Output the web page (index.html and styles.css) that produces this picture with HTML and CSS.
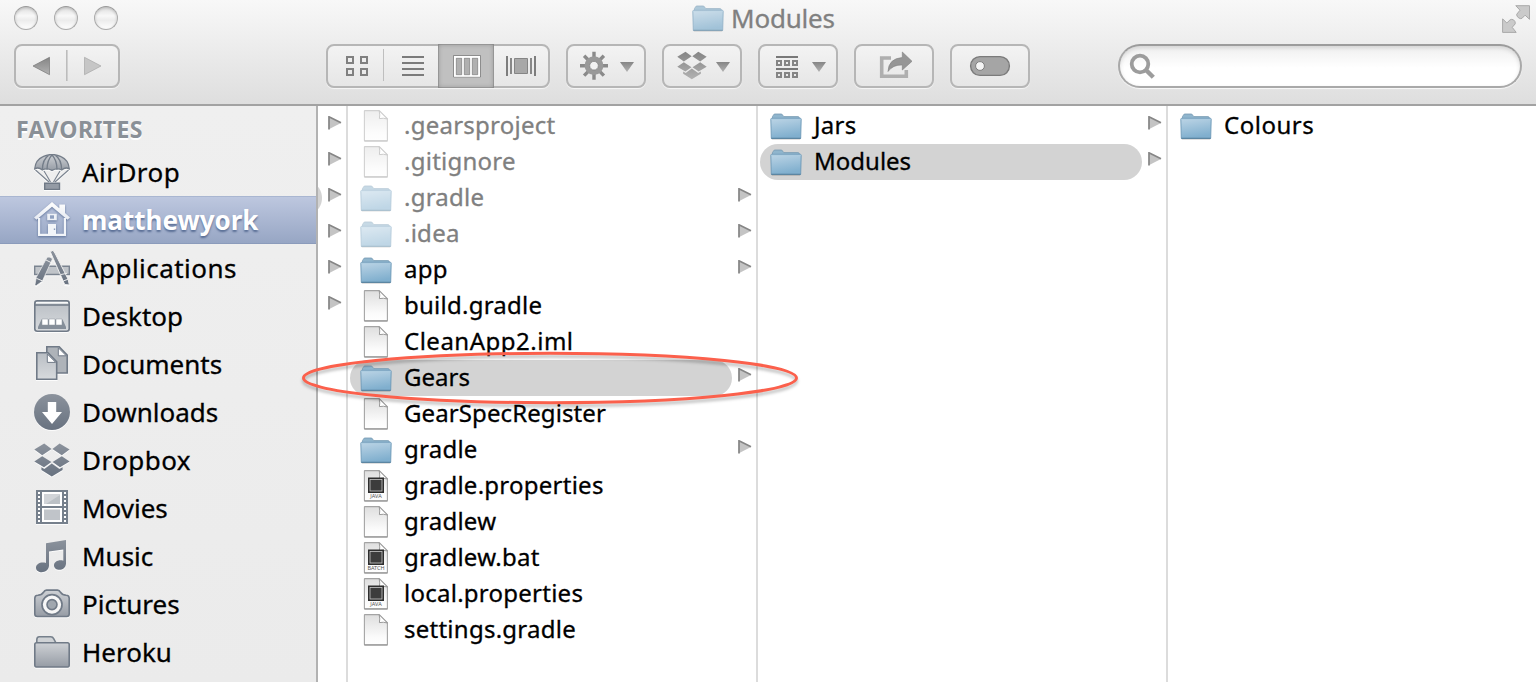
FILE: index.html
```html
<!DOCTYPE html>
<html lang="en">
<head>
<meta charset="utf-8">
<title>Modules</title>
<link rel="stylesheet" href="styles.css">
</head>
<body>
<svg class="defs" width="0" height="0" aria-hidden="true">
  <defs>
    <linearGradient id="gFolder" x1="0" y1="0" x2="0.25" y2="1"><stop offset="0" stop-color="#bdd5e6"/><stop offset="1" stop-color="#80afce"/></linearGradient>
    <linearGradient id="gFile" x1="0" y1="0" x2="0" y2="1"><stop offset="0" stop-color="#dedede"/><stop offset=".75" stop-color="#fbfbfb"/><stop offset="1" stop-color="#fff"/></linearGradient>
    <linearGradient id="gTool" x1="0" y1="0" x2="0" y2="1"><stop offset="0" stop-color="#858585"/><stop offset="1" stop-color="#b2b2b2"/></linearGradient>
    <linearGradient id="gSide" x1="0" y1="0" x2="0" y2="1"><stop offset="0" stop-color="#8b929c"/><stop offset="1" stop-color="#687280"/></linearGradient>
    <linearGradient id="gPale" x1="0" y1="0" x2="0" y2="1"><stop offset="0" stop-color="#ced1d5"/><stop offset="1" stop-color="#969ca5"/></linearGradient>
    <linearGradient id="gLight" x1="0" y1="0" x2="0" y2="1"><stop offset="0" stop-color="#b9bec4"/><stop offset="1" stop-color="#d7dadd"/></linearGradient>
    <linearGradient id="gHouse" x1="0" y1="0" x2="0" y2="1"><stop offset="0" stop-color="#fff"/><stop offset="1" stop-color="#e6eaf1"/></linearGradient>

    <symbol id="folder" viewBox="0 0 32 27">
      <path d="M2.500 8V3.400L4.300 1h7.400l2.100 2.600h14.100q1.600 0 1.600 1.800V8z" fill="#8fb5cd" stroke="#779bb3" stroke-width=".8"/>
      <path d="M.8 6.200q0-.9.9-.9h28.600q.9 0 .9.9L30.700 25.300H1.300z" fill="url(#gFolder)" stroke="#6d99b7" stroke-width=".9"/>
      <path d="M1.300 25.400h29.400" stroke="#5c86a2" stroke-width="1.200"/>
      <path d="M1.300 6.300h29.400" stroke="#a9cbdf" stroke-width=".8"/>
      <path d="M1.800 26.600h28.400" stroke="#000" stroke-opacity=".18" stroke-width=".8"/>
    </symbol>
    <symbol id="file" viewBox="0 0 26 32">
      <path d="M1.400 1.200q0-.6.6-.6h14.200l8.200 8.200v21.400q0 .7-.7.700H2q-.6 0-.6-.7z" fill="url(#gFile)" stroke="#a4a4a4" stroke-width="1.100"/>
      <path d="M16.200.8q1 4.400.2 7.800 4-.9 8 .4z" fill="#fff" stroke="#909090" stroke-width=".9"/>
      <path d="M1.200 31h23.400" stroke="#8d8d8d" stroke-width=".9"/>
    </symbol>
    <symbol id="chip" viewBox="0 0 26 32">
      <rect x="5" y="7.500" width="16" height="15.500" fill="#2e2e2e"/>
      <rect x="7" y="9.500" width="12" height="11.500" fill="#3c3c3c" stroke="#c9c9c9" stroke-width=".8"/>
    </symbol>
    <symbol id="tri" viewBox="0 0 14 14">
      <path d="M.8.8v12.400L13 7z" fill="#c4c4c4"/>
      <path d="M1 13.500V.8L13 6.800" fill="none" stroke="#858585" stroke-width="1.700"/>
    </symbol>
    <symbol id="dropbox" viewBox="0 0 36 36">
      <path d="M10.200 1.500 17.600 7 8.200 13.200.3 7.600zM25.600 1.500 35.600 7.600 27.800 13.200 18.400 7zM8.200 14.200l9.200 5.800-7.400 5.200L.3 19.400zM27.800 14.200l7.800 5.200L26 25.200 18.600 20zM17.800 21.600l7.600 5.400 3.200-1.800v2.700L17.800 34.500 7.400 27.900v-2.700L10.400 27z"/>
    </symbol>
  </defs>
</svg>

<div class="window">
  <header class="toolbar">
    <div class="titlebar">
      <div class="lights"><i></i><i></i><i></i></div>
      <div class="title"><svg class="title-folder"><use href="#folder"/></svg><span>Modules</span></div>
      <svg class="fullscreen" viewBox="0 0 28 28"><g fill="#cacaca" stroke="#a9a9a9" stroke-width="1"><path d="M13.800.7h13.700v13.600l-4.400-4.100-3.200 3.200q-1.400.6-3-.4-2.600-1.500-2.200-3.700L18 5.200z"/><path d="M.6 27.400V13.800L4.800 18 8 14.900q1.600-1.100 3.600 0 2.200 1.800 1.600 4l-3 3.400 4 5.100z"/></g></svg>
    </div>
    <div class="tools">
      <div class="btn nav">
        <svg viewBox="0 0 106 44"><path d="M19 22 35.500 13.300V30.700z" fill="url(#gTool)" stroke="#777" stroke-width=".7"/><path d="M52.800 6v31" stroke="#bcbcbc" stroke-width="1.600"/><path d="M87 22 70.500 13.300V30.700z" fill="#c6c6c6" stroke="#a8a8a8" stroke-width=".7"/></svg>
      </div>
      <div class="btn views">
        <svg class="seg first" viewBox="0 0 58 44"><path d="M21 13h6v6h-6zM35 13h6v6h-6zM21 25h6v6h-6zM35 25h6v6h-6z" fill="none" stroke="#808080" stroke-width="2"/><path d="M57.800 5v32" stroke="#bcbcbc" stroke-width="1.500"/></svg>
        <svg class="seg list" viewBox="0 0 54 44"><path d="M18 13h22M18 19h22M18 25h22M18 31h22" stroke="#7b7b7b" stroke-width="2"/></svg>
        <svg class="seg on" viewBox="0 0 56 44"><path d="M15.500 11.500h27v21.500h-27z" fill="none" stroke="#777" stroke-width=".7"/><path d="M17 13h24v18.800H17zM25 13v18M33 13v18" fill="none" stroke="#fff" stroke-width="2"/><path d="M18.300 14.300h5.400v16.400h-5.400zM26.300 14.300h5.400v16.400h-5.400zM34.300 14.300h5.400v16.400h-5.400z" fill="#b0b0b0" stroke="#888" stroke-width=".7"/></svg>
        <svg class="seg" viewBox="0 0 56 44"><path d="M13 12v20M41 12v20" stroke="#7d7d7d" stroke-width="2"/><path d="M17 14v16M37 14v16" stroke="#888" stroke-width="2"/><path d="M20.500 14.500h13v15h-13z" fill="#a8a8a8" stroke="#858585"/></svg>
      </div>
      <div class="btn"><svg viewBox="0 0 80 44"><g fill="none" stroke="#8a8a8a" stroke-width="3.400"><path d="M28 7.700v6M28 29.700v6M14 21.700h6M36 21.700h6M18.100 11.800l4.200 4.200M33.700 27.400l4.200 4.200M18.100 31.600l4.200-4.200M33.700 16l4.200-4.200"/></g><circle cx="28" cy="21.700" r="6.800" fill="none" stroke="#999" stroke-width="5.200"/><circle cx="28" cy="21.700" r="4.300" fill="#f2f2f2" stroke="#7c7c7c" stroke-width=".7"/><path d="M54 18h14l-7 10z" fill="url(#gTool)"/></svg></div>
      <div class="btn"><svg viewBox="0 0 80 44"><use href="#dropbox" x="15" y="6.500" width="30" height="30" fill="url(#gTool)"/><path d="M54 18h14l-7 10z" fill="url(#gTool)"/></svg></div>
      <div class="btn"><svg viewBox="0 0 80 44"><path d="M18 13h22M18 25h22" stroke="#787878" stroke-width="2"/><path d="M19 17h4v4h-4zM27 17h4v4h-4zM35 17h4v4h-4zM19 29h4v4h-4zM27 29h4v4h-4zM35 29h4v4h-4z" fill="none" stroke="#858585" stroke-width="2"/><path d="M54 18h14l-7 10z" fill="url(#gTool)"/></svg></div>
      <div class="btn"><svg viewBox="0 0 80 44"><path d="M37 14h-9.300v18.200h24.600V26" fill="none" stroke="#afafaf" stroke-width="3.600"/><path d="M34 27.500q.5-13 14.300-14V8L58 17.300 48.300 26v-5Q39 20.500 34 27.500z" fill="#969696" stroke="#7e7e7e" stroke-width=".6"/></svg></div>
      <div class="btn"><svg viewBox="0 0 80 44"><rect x="20.600" y="12.600" width="38.800" height="18.800" rx="9.400" fill="#a5a5a5" stroke="#7b7b7b" stroke-width="1.400"/><circle cx="30" cy="22" r="4.400" fill="#f5f5f5" stroke="#777" stroke-width=".9"/></svg></div>
      <div class="search"><svg viewBox="0 0 44 44"><circle cx="22" cy="20" r="8.300" fill="none" stroke="#9c9c9c" stroke-width="3.800"/><path d="M28 26l7.300 7.300" stroke="#9c9c9c" stroke-width="4.400"/></svg></div>
    </div>
  </header>

  <main class="browser">
    <nav class="sidebar">
      <h2>FAVORITES</h2>
      <ul>
        <li class="wide"><svg viewBox="0 0 36 36"><path d="M1.500 16 15 28M34.500 16 21 28M10 17l6.500 11M26 17l-6.500 11" fill="none" stroke="#7b8490" stroke-width="1.200"/><path d="M.7 14.800Q1.500 6 9 2.700 18-1.700 27 2.700 34.500 6 35.300 14.800q-4-2-7.600 1.200-4.500-2.500-9.700.4-5.200-2.900-9.700-.4Q4.700 12.800.7 14.800z" fill="url(#gPale)" stroke="#747d89" stroke-width="1.300"/><path d="M8.300 16Q8.500 5.500 14.500 1.400M27.700 16Q27.500 5.500 21.500 1.400M13 15.800Q13 6 18 1 23 6 23 15.800" fill="none" stroke="#747d89" stroke-width="1.300"/><path d="M10.700 29.200h14.800v6.200H10.700z" fill="#949ba5" stroke="#6f7986" stroke-width="1.400"/></svg><span>AirDrop</span></li>
        <li class="on"><svg viewBox="0 0 36 36"><path d="M0 15.500 18 0l7.300 6.200V2.600H31V11l5 4.500-2.500 2.300-15.500-13-15.500 13z" fill="url(#gHouse)"/><path d="M5.100 16v16.900h25.800V16" fill="none" stroke="#f2f5f9" stroke-width="2.200"/><path d="M13.200 11.800h9.600v6.400h-9.600z" fill="#eef1f6"/><path d="M16 13.300h4v3.400h-4z" fill="#8fa0c0"/><path d="M14 22h8v11h-8z" fill="#f2f5f9"/><path d="M19.800 26.500h1.400v1.400h-1.400z" fill="#7f91b2"/></svg><span>matthewyork</span></li>
        <li class="wide"><svg viewBox="0 0 36 36"><path d="M.7 16.200h34.600v8.300H.7z" fill="#c0c4c9" stroke="#7b8490" stroke-width="1.400"/><path d="M16.300 1.800 19 .2l2.300 3.600 12.800 25.400 1.300 5.800-4.700-.5z" fill="url(#gSide)" stroke="#eee" stroke-width="1"/><path d="M13.200 7.200q2.500-1 5.300 1.600L8.300 31.200l-6.300 4.600-1-1.300 1.300-7.200z" fill="url(#gSide)" stroke="#eee" stroke-width=".7"/><path d="m12 10 5.300 2.700M2.400 28.300l6 2.600M27 24.500l6-1.200M29.300 31l5.200-2" stroke="#eee" stroke-width="1"/></svg><span>Applications</span></li>
        <li><svg viewBox="0 0 36 36"><rect x=".8" y="2.800" width="34.400" height="30.400" rx="2.500" fill="url(#gLight)" stroke="#707a87" stroke-width="1.600"/><path d="M2 4.800h32" stroke="#fff" stroke-width="1.400"/><path d="M1 7h34" stroke="#707a87" stroke-width="1.300"/><path d="M7.500 21.500h21L32 29v2H4v-2z" fill="#858e99"/><path d="M8 21h6v6H8zM15 21h6v6h-6zM22 21h6v6h-6z" fill="#fff" stroke="#8d949e" stroke-width=".5"/></svg><span>Desktop</span></li>
        <li><svg viewBox="0 0 36 36"><path d="M12.800.800h12.400l8 8.200v18H12.800z" fill="#aeb3b9" stroke="#707a87" stroke-width="1.600"/><path d="M24.300 1.800v8h8z" fill="#fff" stroke="#707a87" stroke-width="1"/><path d="M2.800 6.800H14l8.700 9v17.400H2.800z" fill="url(#gLight)" stroke="#707a87" stroke-width="1.600"/><path d="M13.300 8v8.400h8.400z" fill="#fff" stroke="#707a87" stroke-width="1"/></svg><span>Documents</span></li>
        <li><svg viewBox="0 0 36 36"><circle cx="18" cy="18" r="18" fill="url(#gSide)"/><path d="M13.800 8h8.400v10H28l-10 12L8 18h5.800z" fill="#fff"/></svg><span>Downloads</span></li>
        <li class="wide"><svg viewBox="0 0 36 36" fill="url(#gSide)"><use href="#dropbox"/></svg><span>Dropbox</span></li>
        <li><svg viewBox="0 0 36 36"><path d="M2 0h32v34H2z" fill="#76808c"/><path d="M8 2h20v14H8zM8 18h20v14H8z" fill="#fff"/><path d="M10 4h16v10H10z" fill="#d1d4d8"/><path d="M26 5v9H12z" fill="#bcc1c6"/><path d="M10 19.500h16V30H10z" fill="#c0c4c9"/><path d="M5 2v31M31 2v31" stroke="#fff" stroke-width="2" stroke-dasharray="2 2"/></svg><span>Movies</span></li>
        <li><svg viewBox="0 0 36 36"><path d="M12 5.200 32 2v23.200c0 8.500-12 8.300-12 2.300 0-3.700 4.700-6.200 9.300-4.700V11.500L15 13.500v13.800c0 8.700-13 8.700-13 2.400 0-4 5-6.200 10-4.700z" fill="url(#gSide)"/></svg><span>Music</span></li>
        <li><svg viewBox="0 -1.300 36 36"><path d="M.8 11q0-3 3-3 3.800-.2 5.700-3 1-2.200 3-2.200h11q2 0 3 2.200 1.900 2.800 5.700 3 3 0 3 3v15.700q0 2.500-2.500 2.500H3.300q-2.500 0-2.500-2.500z" fill="url(#gPale)" stroke="#707a87" stroke-width="1.600"/><circle cx="18" cy="17.300" r="10" fill="#f7f7f7" stroke="#707a87" stroke-width="1.700"/><circle cx="18" cy="17.300" r="5" fill="#a0a7af" stroke="#707a87" stroke-width="1.600"/></svg><span>Pictures</span></li>
        <li><svg viewBox="0 -2 36 36"><path d="M2.800 8V3.800q0-3 2.500-3h11.500q2 0 3 2L22 7" fill="#cfd2d5" stroke="#76808c" stroke-width="1.600"/><path d="M.8 8.500q0-1.700 1.700-1.700h31q1.700 0 1.700 1.700V29q0 2-1.500 2H2.300Q.8 31 .8 29z" fill="url(#gPale)" stroke="#707a87" stroke-width="1.600"/></svg><span>Heroku</span></li>
      </ul>
    </nav>

    <section class="col stub">
      <div class="row"><svg class="tri"><use href="#tri"/></svg></div>
      <div class="row"><svg class="tri"><use href="#tri"/></svg></div>
      <div class="row tail"><svg class="tri"><use href="#tri"/></svg></div>
      <div class="row"><svg class="tri"><use href="#tri"/></svg></div>
      <div class="row"><svg class="tri"><use href="#tri"/></svg></div>
      <div class="row"><svg class="tri"><use href="#tri"/></svg></div>
    </section>

    <section class="col">
      <div class="row dim"><svg class="file"><use href="#file"/></svg><span>.gearsproject</span></div>
      <div class="row dim"><svg class="file"><use href="#file"/></svg><span>.gitignore</span></div>
      <div class="row dim"><svg class="folder"><use href="#folder"/></svg><span>.gradle</span><svg class="tri"><use href="#tri"/></svg></div>
      <div class="row dim"><svg class="folder"><use href="#folder"/></svg><span>.idea</span><svg class="tri"><use href="#tri"/></svg></div>
      <div class="row"><svg class="folder"><use href="#folder"/></svg><span>app</span><svg class="tri"><use href="#tri"/></svg></div>
      <div class="row"><svg class="file"><use href="#file"/></svg><span>build.gradle</span></div>
      <div class="row wide"><svg class="file"><use href="#file"/></svg><span>CleanApp2.iml</span></div>
      <div class="row picked"><svg class="folder"><use href="#folder"/></svg><span>Gears</span><svg class="tri"><use href="#tri"/></svg></div>
      <div class="row tight"><svg class="file"><use href="#file"/></svg><span>GearSpecRegister</span></div>
      <div class="row"><svg class="folder"><use href="#folder"/></svg><span>gradle</span><svg class="tri"><use href="#tri"/></svg></div>
      <div class="row"><svg class="file" viewBox="0 0 26 32"><use href="#file"/><use href="#chip"/><text class="kind" x="13" y="28.300">JAVA</text></svg><span>gradle.properties</span></div>
      <div class="row"><svg class="file"><use href="#file"/></svg><span>gradlew</span></div>
      <div class="row"><svg class="file" viewBox="0 0 26 32"><use href="#file"/><use href="#chip"/><text class="kind" x="13" y="28.300">BATCH</text></svg><span>gradlew.bat</span></div>
      <div class="row"><svg class="file" viewBox="0 0 26 32"><use href="#file"/><use href="#chip"/><text class="kind" x="13" y="28.300">JAVA</text></svg><span>local.properties</span></div>
      <div class="row"><svg class="file"><use href="#file"/></svg><span>settings.gradle</span></div>
    </section>

    <section class="col">
      <div class="row"><svg class="folder"><use href="#folder"/></svg><span>Jars</span><svg class="tri"><use href="#tri"/></svg></div>
      <div class="row picked"><svg class="folder"><use href="#folder"/></svg><span>Modules</span><svg class="tri"><use href="#tri"/></svg></div>
    </section>

    <section class="col last">
      <div class="row wide"><svg class="folder"><use href="#folder"/></svg><span>Colours</span></div>
    </section>
  </main>

  <svg class="callout" viewBox="0 0 504 64"><ellipse cx="250" cy="28" rx="246.500" ry="24.700" fill="none" stroke="#fb604c" stroke-width="3"/></svg>
</div>
</body>
</html>
```
FILE: styles.css
```css
* { box-sizing: border-box; }

body {
  margin: 0;
  background: #fff;
  color: #000;
  font-family: "Noto Sans", "Open Sans", sans-serif;
  font-size: 24px;
  -webkit-text-stroke: .3px currentColor;
}

svg { display: block; flex: none; }
.defs { position: absolute; }

.window {
  position: relative;
  display: flex;
  flex-direction: column;
  width: 1536px;
  height: 682px;
  overflow: hidden;
}

/* Toolbar */
.toolbar {
  flex: none;
  height: 106px;
  border-bottom: 2px solid #a2a2a2;
  background: linear-gradient(#f8f8f8, #dedede);
}

.titlebar {
  display: grid;
  grid-template-columns: 678px auto 1fr;
  height: 44px;
  padding: 0 6px 0 14px;
}

.lights { display: flex; gap: 16px; padding-top: 6px; }
.lights i {
  width: 24px;
  height: 24px;
  border: 1.500px solid #ababab;
  border-top-color: #989898;
  border-radius: 50%;
  background: linear-gradient(#dedede, #f8f8f8 40%, #ececec 60%, #fff);
  box-shadow: inset 0 1px 3px rgba(0, 0, 0, .2);
}

.title { display: flex; gap: 7px; color: #808080; font-size: 26px; line-height: 36px; letter-spacing: -.2px; }
.title-folder { width: 32px; height: 27px; margin-top: 5px; opacity: .7; }
.fullscreen { width: 28px; height: 28px; margin-top: 5px; justify-self: end; }

.tools { display: flex; gap: 16px; padding: 0 14px; }

.btn {
  display: flex;
  flex: none;
  width: 80px;
  height: 44px;
  border: 2px solid #b6b6b6;
  border-radius: 8px;
  background: linear-gradient(#f3f3f3, #e6e6e6);
  box-shadow: 0 1px 1px rgba(255, 255, 255, .7);
}
.btn > svg { width: 80px; height: 44px; margin: -2px; }
.btn.nav { width: 106px; margin-right: 190px; }
.btn.nav > svg { width: 106px; }
.btn.views { width: 224px; }
.views > .seg { width: 56px; margin: -2px 0; }
.views > .first { width: 58px; margin-left: -2px; }
.views > .list { width: 54px; }
.seg.on { background: #c0c0c0; box-shadow: inset 0 0 5px rgba(0, 0, 0, .28), inset 0 0 0 1px #aaa; }

.search {
  flex: none;
  width: 404px;
  height: 44px;
  margin-left: 72px;
  border: 2px solid #a9a9a9;
  border-top-color: #9c9c9c;
  border-radius: 22px;
  background: linear-gradient(#efefef, #fff 55%);
  box-shadow: inset 0 2px 4px rgba(0, 0, 0, .12), 0 1px 1px rgba(255, 255, 255, .8);
}
.search svg { width: 44px; height: 44px; margin: -2px; }

/* Sidebar */
.browser { display: flex; flex: 1; min-height: 0; }

.sidebar {
  flex: none;
  width: 318px;
  border-right: 2px solid #b2b2b2;
  background: linear-gradient(#efefef, #ebebeb);
}
.sidebar h2 {
  height: 42px;
  margin: 0;
  padding-left: 16px;
  color: #8a9097;
  font-size: 23px;
  font-weight: 700;
  letter-spacing: .45px;
  line-height: 46px;
  text-shadow: 0 2px 0 #fff;
  -webkit-text-stroke: 0;
}
.sidebar ul { margin: 0; padding: 0; list-style: none; }
.sidebar li {
  display: flex;
  align-items: center;
  gap: 12px;
  height: 48px;
  padding-left: 34px;
  font-size: 26px;
  line-height: 48px;
}
.sidebar li.wide { letter-spacing: .45px; }
.sidebar li svg { width: 36px; height: 36px; filter: drop-shadow(0 1px 0 rgba(255, 255, 255, .8)); }
.sidebar li.on {
  border-top: 1px solid #a9b6d1;
  border-bottom: 1px solid #8b9bbb;
  background: linear-gradient(#bdc7df, #97a6c4);
  color: #fff;
  font-weight: 700;
  text-shadow: 0 2px 2px rgba(50, 75, 120, .65);
  -webkit-text-stroke: 0;
}
.sidebar li.on svg { filter: drop-shadow(0 1px 1px rgba(50, 75, 120, .6)); }

/* Columns */
.col {
  flex: none;
  width: 410px;
  padding-top: 2px;
  border-right: 2px solid #dcdcdc;
}
.col.last { width: 368px; border: 0; }
.col.stub { width: 30px; }

.row {
  display: flex;
  width: 382px;
  height: 36px;
  margin-left: 2px;
  padding-left: 10px;
  border-radius: 18px;
  letter-spacing: .25px;
  line-height: 34px;
}
.row.wide { letter-spacing: .5px; }
.row.tight { letter-spacing: .1px; }
.row.picked { background: #d3d3d3; letter-spacing: 0; }
.row.dim { color: #808080; }
.row.dim .folder, .row.dim .file { opacity: .5; }
.row .folder { width: 32px; height: 27px; margin: 5px 12px 0 0; }
.row .file { width: 26px; height: 32px; margin: 2px 15px 0 3px; }
.row .tri { width: 14px; height: 14px; margin: 8px -20px 0 auto; }
.stub .row { width: 28px; margin: 0; border-radius: 0; }
.stub .row .tri { margin: 8px 0 0; }
.row.tail { background: radial-gradient(circle at -14px 18px, #d3d3d3 17.500px, transparent 18.500px); }

.kind {
  fill: #555;
  font-size: 5.500px;
  letter-spacing: 0;
  text-anchor: middle;
}

/* Annotation ring laid over the columns */
.callout {
  position: absolute;
  left: 300px;
  top: 350px;
  width: 504px;
  height: 64px;
  filter: drop-shadow(0 3px 1.500px rgba(0, 0, 0, .25));
}
```
